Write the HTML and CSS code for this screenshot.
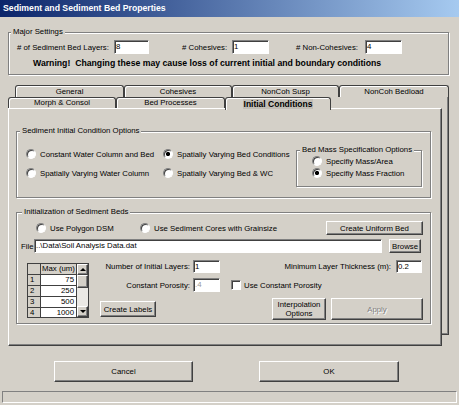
FILE: index.html
```html
<!DOCTYPE html>
<html lang="en">
<head>
    <meta charset="UTF-8">
    <meta name="viewport" content="width=device-width, initial-scale=1.0">
    <title>Sediment and Sediment Bed Properties</title>
    <link rel="stylesheet" href="styles.css">
</head>
<body>
<div class="window">
    <div class="titlebar">Sediment and Sediment Bed Properties</div>

    <fieldset class="group major">
        <legend>Major Settings</legend>
        <div class="major-row">
            <span class="lbl-layers"># of Sediment Bed Layers:</span>
            <div class="edit w35">8</div>
            <span class="lbl-coh"># Cohesives:</span>
            <div class="edit w37">1</div>
            <span class="lbl-noncoh"># Non-Cohesives:</span>
            <div class="edit w37">4</div>
        </div>
        <p class="warning">Warning!&nbsp; Changing these may cause loss of current initial and boundary conditions</p>
    </fieldset>

    <div class="tabs">
        <div class="tabrow back">
            <div class="tab t-general">General</div>
            <div class="tab t-coh">Cohesives</div>
            <div class="tab t-susp">NonCoh Susp</div>
            <div class="tab t-bedload">NonCoh Bedload</div>
        </div>
        <div class="tabrow front">
            <div class="tab t-morph">Morph &amp; Consol</div>
            <div class="tab t-bedproc">Bed Processes</div>
            <div class="tab t-init selected"><span class="focus">Initial Conditions</span></div>
        </div>
        <!-- frame of the back-row tab page, shows at the right of the panel -->
        <div class="ghost"></div>

        <div class="panel">
            <fieldset class="group init-opts">
                <legend>Sediment Initial Condition Options</legend>
                <div class="opts-row">
                    <div class="opts-grid">
                        <div class="radio"><span class="dot"></span>Constant Water Column and Bed</div>
                        <div class="radio"><span class="dot on"></span>Spatially Varying Bed Conditions</div>
                        <div class="radio"><span class="dot"></span>Spatially Varying Water Column</div>
                        <div class="radio"><span class="dot"></span>Spatially Varying Bed &amp; WC</div>
                    </div>
                    <fieldset class="group mass">
                        <legend>Bed Mass Specification Options</legend>
                        <div class="radio"><span class="dot"></span>Specifiy Mass/Area</div>
                        <div class="radio"><span class="dot on"></span>Specifiy Mass Fraction</div>
                    </fieldset>
                </div>
            </fieldset>

            <fieldset class="group init-beds">
                <legend>Initialization of Sediment Beds</legend>
                <div class="row-a">
                    <div class="radio r-poly"><span class="dot"></span>Use Polygon DSM</div>
                    <div class="radio"><span class="dot"></span>Use Sediment Cores with Grainsize</div>
                    <div class="btn btn-uniform">Create Uniform Bed</div>
                </div>
                <div class="row-b">
                    <span class="file-lbl">File</span>
                    <div class="edit file-edit">..\Data\Soil Analysis Data.dat</div>
                    <div class="btn btn-browse">Browse</div>
                </div>
                <div class="row-c">
                    <div class="grid-box">
                        <div class="cells">
                            <div class="hdr"></div><div class="hdr">Max (um)</div>
                            <div class="rh">1</div><div class="val">75</div>
                            <div class="rh">2</div><div class="val">250</div>
                            <div class="rh">3</div><div class="val">500</div>
                            <div class="rh">4</div><div class="val">1000</div>
                        </div>
                        <div class="vscroll">
                            <div class="sb-btn"><span class="arrow up"></span></div>
                            <div class="sb-thumb"></div>
                            <div class="sb-track"></div>
                            <div class="sb-btn"><span class="arrow down"></span></div>
                        </div>
                    </div>
                    <div class="fields">
                        <div class="f-row">
                            <span class="f-lbl">Number of Initial Layers:</span>
                            <div class="edit f-small">1</div>
                            <span class="f-lbl wide">Minimum Layer Thickness (m):</span>
                            <div class="edit f-thick">0.2</div>
                        </div>
                        <div class="f-row second">
                            <span class="f-lbl">Constant Porosity:</span>
                            <div class="edit f-small disabled">.4</div>
                            <div class="check"><span class="box"></span>Use Constant Porosity</div>
                        </div>
                        <div class="f-row buttons">
                            <div class="btn btn-labels">Create Labels</div>
                            <div class="btn btn-interp">Interpolation<br>Options</div>
                            <div class="btn btn-apply disabled">Apply</div>
                        </div>
                    </div>
                </div>
            </fieldset>
        </div>
    </div>

    <div class="dlg-buttons">
        <div class="btn btn-cancel">Cancel</div>
        <div class="btn btn-ok">OK</div>
    </div>
    <div class="statusbar"></div>
</div>
</body>
</html>
```

FILE: styles.css
```css
* {
    box-sizing: border-box;
}

body {
    margin: 0;
    background-color: #d4d0c8;
    font-family: "Liberation Sans", Arial, sans-serif;
    font-size: 7.8px;
    color: #000;
}

.window {
    width: 459px;
    height: 405px;
    display: flex;
    flex-direction: column;
    overflow: hidden;
    background-color: #d4d0c8;
}

.titlebar {
    flex: none;
    height: 17px;
    padding-left: 3px;
    line-height: 17px;
    font-size: 8.7px;
    font-weight: bold;
    color: #fff;
    background: linear-gradient(to right, #0a246a, #a6caf0);
}

/* group boxes */
.group {
    margin: 0;
    padding: 0;
    min-width: 0;
    border: 1px solid #808080;
    box-shadow: 1px 1px 0 #fff, inset 1px 1px 0 #fff;
}
.group > legend {
    padding: 0 2px;
    line-height: 10px;
    background-color: #d4d0c8;
}

/* edit boxes and buttons */
.edit {
    flex: none;
    height: 14px;
    padding: 0 1px;
    line-height: 12px;
    white-space: nowrap;
    overflow: hidden;
    background-color: #fff;
    border: 1px solid;
    border-color: #808080 #fff #fff #808080;
    box-shadow: inset 1px 1px 0 #404040;
}
.edit.disabled {
    color: #9a9a9a;
}
.w35 { width: 35px; }
.w37 { width: 37px; }

.btn {
    flex: none;
    display: flex;
    align-items: center;
    justify-content: center;
    text-align: center;
    white-space: nowrap;
    background-color: #d4d0c8;
    border: 1px solid;
    border-color: #fff #404040 #404040 #fff;
    box-shadow: inset -1px -1px 0 #808080;
}
.btn.disabled {
    color: #808080;
    text-shadow: 1px 1px 0 #fff;
}

.radio {
    display: flex;
    align-items: center;
    height: 12px;
    white-space: nowrap;
}
.dot {
    flex: none;
    width: 10px;
    height: 10px;
    margin-right: 4px;
    border-radius: 50%;
    background: #fff;
    border: 1px solid;
    border-color: #808080 #fff #fff #808080;
    box-shadow: inset 1px 1px 0 #404040;
}
.dot.on {
    background: radial-gradient(circle, #000 0 1.8px, #fff 2.4px);
}

/* major settings */
.major {
    flex: none;
    margin: 10px 10px 0 8px;
    padding: 3px 8px 5px;
}
.major > legend {
    margin-left: -6px;
}
.major-row {
    display: flex;
    align-items: center;
    height: 14px;
}
.lbl-layers { width: 97px; }
.lbl-coh { width: 50px; margin-left: 33px; }
.lbl-noncoh { width: 69px; margin-left: 27px; }
.warning {
    margin: 4px 0 0 16px;
    line-height: 11px;
    font-size: 8.7px;
    font-weight: bold;
    white-space: nowrap;
}

/* tab control */
.tabs {
    position: relative;
    flex: none;
    width: 441px;
    margin: 10px 0 0 8px;
}
.tabrow {
    display: flex;
    align-items: flex-start;
}
.tabrow.back {
    height: 12px;
    padding-left: 7px;
    line-height: 11px;
}
.tabrow.front {
    height: 11px;
    line-height: 10px;
}
.tab {
    flex: none;
    height: 100%;
    text-align: center;
    white-space: nowrap;
    background-color: #d4d0c8;
    border: 1px solid #404040;
    border-bottom: none;
    border-radius: 3px 3px 0 0;
    box-shadow: inset 1px 1px 0 #fff;
}
.t-general { width: 109px; }
.t-coh { width: 108px; }
.t-susp { width: 107px; }
.t-bedload { width: 110px; }
.t-morph { width: 108px; }
.t-bedproc { width: 109px; }
.t-init { width: 106px; }
.tab.selected {
    position: relative;
    z-index: 2;
    height: 13px;
    font-size: 8.5px;
    font-weight: bold;
    line-height: 11px;
    padding-top: 1px;
}
.focus {
    padding: 0 1px;
    background-color: #c2beb6;
}
.ghost {
    position: absolute;
    left: 331px;
    top: 12px;
    width: 110px;
    height: 238px;
    border-right: 1px solid #404040;
    border-bottom: 1px solid #404040;
    box-shadow: inset -1px -1px 0 #808080;
}
.panel {
    position: relative;
    z-index: 1;
    width: 434px;
    height: 238px;
    padding: 17px 10px 0 7px;
    background-color: #d4d0c8;
    border: 1px solid;
    border-color: #fff #404040 #404040 #fff;
    box-shadow: inset -1px -1px 0 #808080;
}

/* initial condition options */
.init-opts {
    width: 415px;
    padding: 0 0 10px 9px;
}
.init-opts > legend {
    margin-left: -6px;
}
.opts-row {
    display: flex;
    align-items: flex-start;
}
.opts-grid {
    display: grid;
    grid-template-columns: 137px 133px;
    row-gap: 7px;
    padding-top: 12px;
}
.mass {
    width: 126px;
    margin-top: 9px;
    padding: 0 0 7px 15px;
}
.mass > legend {
    margin-left: -12px;
}

/* initialization of beds */
.init-beds {
    width: 415px;
    margin-top: 9px;
    padding: 4px 7px 3px 4px;
}
.init-beds > legend {
    margin-left: 1px;
}
.row-a {
    display: flex;
    align-items: center;
    height: 14px;
    margin-left: 15px;
}
.r-poly { width: 104px; }
.btn-uniform {
    width: 97px;
    height: 14px;
    margin-left: auto;
}
.row-b {
    display: flex;
    align-items: center;
    height: 14px;
    margin-top: 4px;
}
.file-lbl { width: 13px; }
.file-edit { width: 348px; }
.btn-browse {
    width: 32px;
    height: 14px;
    margin-left: auto;
    margin-right: 2px;
}
.row-c {
    display: flex;
    align-items: flex-start;
    margin-top: 7px;
}

/* layer grid */
.grid-box {
    flex: none;
    display: flex;
    width: 62px;
    height: 55px;
    margin: 3px 0 0 6px;
    background-color: #fff;
    border: 1px solid #404040;
}
.cells {
    display: grid;
    grid-template-columns: 12px 35px;
    grid-auto-rows: 10px;
    gap: 1px;
    width: 49px;
    height: 53px;
    overflow: hidden;
    background-color: #404040;
    border-right: 1px solid #404040;
    line-height: 10px;
}
.hdr {
    text-align: center;
    background-color: #d4d0c8;
}
.rh {
    padding-left: 2px;
    background-color: #d4d0c8;
}
.val {
    padding-right: 2px;
    text-align: right;
    background-color: #fff;
}
.vscroll {
    display: flex;
    flex-direction: column;
    width: 11px;
}
.sb-btn,
.sb-thumb {
    flex: none;
    display: flex;
    align-items: center;
    justify-content: center;
    background-color: #d4d0c8;
    border: 1px solid;
    border-color: #fff #404040 #404040 #fff;
    box-shadow: inset -1px -1px 0 #808080;
}
.sb-btn { height: 11px; }
.sb-thumb { height: 13px; }
.sb-track {
    flex: 1;
    background-color: #ebe9e5;
}
.arrow {
    width: 0;
    height: 0;
    border-left: 3px solid transparent;
    border-right: 3px solid transparent;
}
.arrow.up { border-bottom: 3px solid #000; }
.arrow.down { border-top: 3px solid #000; }

/* fields at the right of the grid */
.fields {
    width: 323px;
    margin-left: 11px;
}
.f-row {
    display: flex;
    align-items: center;
}
.f-lbl {
    width: 90px;
    margin-right: 3px;
    text-align: right;
    white-space: nowrap;
}
.f-lbl.wide {
    width: 171px;
    margin-right: 5px;
}
.f-small { width: 27px; height: 13px; }
.f-thick { width: 26px; height: 13px; }
.f-row.second { margin-top: 5px; }
.f-row.second .f-small { height: 14px; }
.check {
    display: flex;
    align-items: center;
    margin-left: 11px;
    white-space: nowrap;
}
.box {
    flex: none;
    width: 10px;
    height: 10px;
    margin-right: 3px;
    background-color: #fff;
    border: 1px solid;
    border-color: #808080 #fff #fff #808080;
    box-shadow: inset 1px 1px 0 #404040;
}
.f-row.buttons {
    align-items: flex-start;
    margin-top: 6px;
}
.btn-labels {
    width: 56px;
    height: 16px;
    margin-top: 3px;
}
.btn-interp {
    width: 54px;
    height: 22px;
    margin-left: 116px;
    line-height: 9px;
}
.btn-apply {
    width: 92px;
    height: 22px;
    margin-left: 5px;
}

/* dialog buttons and status bar */
.dlg-buttons {
    flex: none;
    display: flex;
    height: 21px;
    margin-top: 15px;
}
.btn-cancel { width: 139px; margin-left: 54px; }
.btn-ok { width: 140px; margin-left: 66px; }
.statusbar {
    flex: none;
    height: 12px;
    margin: 9px 2px 0;
    border: 1px solid;
    border-color: #808080 #fff #fff #808080;
}
```
